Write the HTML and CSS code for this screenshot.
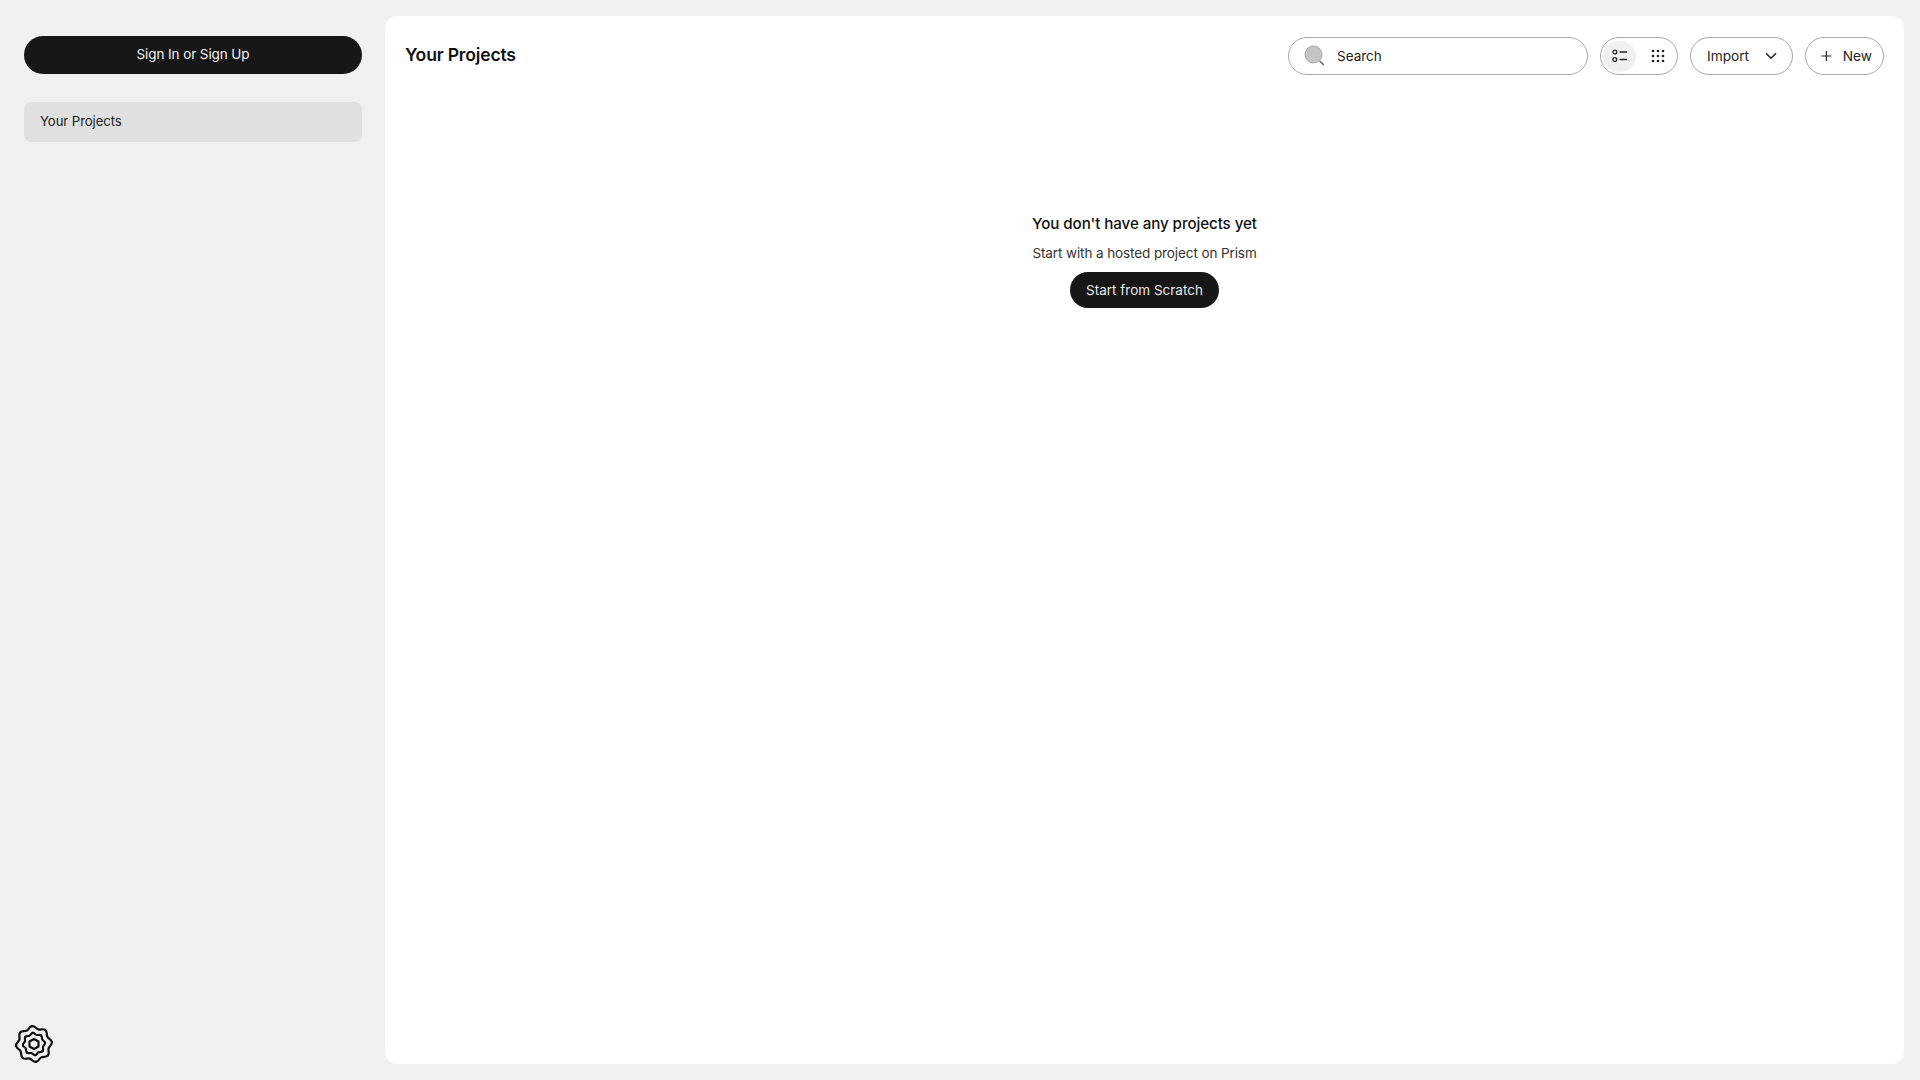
FILE: index.html
```html
<!DOCTYPE html>
<html lang="en">
<head>
<meta charset="utf-8">
<title>Your Projects</title>
<link rel="stylesheet" href="styles.css">
</head>
<body>
<div class="app">
  <aside class="sidebar">
    <button class="signin">Sign In or Sign Up</button>
    <a class="nav-item">Your Projects</a>
    <div class="spacer"></div>
    <svg class="logo" width="42" height="42" viewBox="-21 -21 42 42" fill="none" stroke="#111" stroke-width="2.200" stroke-linecap="round">
      <defs>
        <path id="lobe" d="M18 0C18 3 15 3.510 14.040 5.820C13.080 8.130 14.850 10.610 12.730 12.730"/>
        <g id="flower">
          <use href="#lobe"/>
          <use href="#lobe" transform="rotate(45)"/>
          <use href="#lobe" transform="rotate(90)"/>
          <use href="#lobe" transform="rotate(135)"/>
          <use href="#lobe" transform="rotate(180)"/>
          <use href="#lobe" transform="rotate(225)"/>
          <use href="#lobe" transform="rotate(270)"/>
          <use href="#lobe" transform="rotate(315)"/>
        </g>
      </defs>
      <use href="#flower" transform="rotate(-6)"/>
      <use href="#flower" transform="rotate(-6) scale(0.62)" stroke-width="3.400"/>
      <path d="M0 -5L4.500 -2.500V2.500L0 5L-4.500 2.500V-2.500Z" stroke-linejoin="round"/>
    </svg>
  </aside>
  <main class="main">
    <header class="topbar">
      <h1 class="title">Your Projects</h1>
      <div class="actions">
        <label class="search">
          <svg class="search-icon" width="22" height="22" viewBox="0 0 22 22">
            <circle cx="9.500" cy="9.500" r="8.500" fill="#c4c4c4" stroke="#a8a8a8"/>
            <path d="M15.800 16l4 4" stroke="#6a6060" stroke-width="1.400" fill="none"/>
          </svg>
          <span class="search-text">Search</span>
        </label>
        <div class="toggle">
          <span class="toggle-btn active">
            <svg width="16" height="14" viewBox="0 0 16 14" fill="none" stroke="#222" stroke-width="1.300">
              <circle cx="2.800" cy="3" r="1.900"/><circle cx="2.800" cy="10.500" r="1.900"/>
              <path d="M7.500 3h7.500M7.500 10.500h7.500"/>
            </svg>
          </span>
          <span class="toggle-btn">
            <svg width="14" height="14" viewBox="0 0 14 14" fill="#222">
              <circle cx="2" cy="2" r="1.300"/><circle cx="7" cy="2" r="1.300"/><circle cx="12" cy="2" r="1.300"/>
              <circle cx="2" cy="7" r="1.300"/><circle cx="7" cy="7" r="1.300"/><circle cx="12" cy="7" r="1.300"/>
              <circle cx="2" cy="12" r="1.300"/><circle cx="7" cy="12" r="1.300"/><circle cx="12" cy="12" r="1.300"/>
            </svg>
          </span>
        </div>
        <button class="pill import">Import
          <svg width="12" height="8" viewBox="0 0 12 8" fill="none" stroke="#222" stroke-width="1.500"><path d="M1 1.300l5 5 5-5"/></svg>
        </button>
        <button class="pill new">
          <svg width="12" height="12" viewBox="0 0 12 12" fill="none" stroke="#222" stroke-width="1.300"><path d="M6 0.500v11M0.500 6h11"/></svg>
          New
        </button>
      </div>
    </header>
    <section class="empty">
      <h2 class="empty-title">You don't have any projects yet</h2>
      <p class="empty-sub">Start with a hosted project on Prism</p>
      <button class="start">Start from Scratch</button>
    </section>
  </main>
</div>
</body>
</html>
```
FILE: styles.css
```css
* { box-sizing: border-box; }
html, body { margin: 0; height: 100%; }
body {
  background: #f0f0f0;
  color: #111;
  font-family: Inter, "Liberation Sans", sans-serif;
  font-size: 14px;
}
button { font-family: inherit; cursor: pointer; }
.app { display: flex; height: 1080px; padding: 16px 16px 16px 0; }
.sidebar {
  width: 385px;
  flex: none;
  display: flex;
  flex-direction: column;
  padding: 20px 23px 0 24px;
}
.signin {
  height: 38px;
  padding-bottom: 3px;
  border: 0;
  border-radius: 19px;
  background: #171717;
  color: #f2f2f2;
  font-size: 13.500px;
  letter-spacing: -0.1px;
}
.nav-item {
  display: flex;
  align-items: center;
  height: 40px;
  margin-top: 28px;
  padding: 0 0 2px 16px;
  border-radius: 7px;
  background: #e0e0e0;
  color: #222;
  font-size: 13.200px;
  letter-spacing: -0.1px;
}
.spacer { flex: 1; }
.logo { margin: 0 0 -1px -11px; display: block; }
.main {
  flex: 1;
  background: #fff;
  border-radius: 12px;
  padding: 21px 20px 0 20px;
}
.topbar { display: flex; justify-content: space-between; align-items: center; height: 38px; }
.title { margin: 0 0 3px; font-size: 17.600px; font-weight: 600; letter-spacing: -0.2px; }
.actions { display: flex; align-items: center; gap: 12px; }
.search {
  display: flex;
  align-items: center;
  width: 300px;
  height: 38px;
  padding-left: 15px;
  border: 1px solid #aaa;
  border-radius: 19px;
}
.search-text { margin: 0 0 1px 11px; font-size: 13.500px; color: #222; }
.toggle {
  display: flex;
  align-items: center;
  width: 78px;
  height: 38px;
  padding: 0 2px;
  gap: 5px;
  border: 1px solid #aaa;
  border-radius: 19px;
}
.toggle-btn {
  display: flex;
  align-items: center;
  justify-content: center;
  width: 33px;
  height: 31px;
  border-radius: 50%;
}
.toggle-btn.active { background: #f0f0f0; }
.pill {
  display: flex;
  align-items: center;
  height: 38px;
  padding: 0 16px;
  background: #fff;
  border: 1px solid #aaa;
  border-radius: 19px;
  color: #222;
  font-size: 13.700px;
}
.import { width: 103px; justify-content: space-between; padding-right: 15px; }
.new { width: 79px; gap: 11px; padding: 0 11px 0 15px; }
.empty { display: flex; flex-direction: column; align-items: center; margin-top: 138px; }
.empty-title { margin: 0; font-size: 15.200px; font-weight: 450; line-height: 22px; letter-spacing: -0.1px; }
.empty-sub { margin: 8px 0 0; font-size: 13.500px; line-height: 20px; color: #333; letter-spacing: -0.1px; }
.start {
  height: 36px;
  margin-top: 9px;
  padding: 0 16px 1px;
  border: 0;
  border-radius: 18px;
  background: #171717;
  color: #e8e8e8;
  font-size: 13.500px;
}
```
